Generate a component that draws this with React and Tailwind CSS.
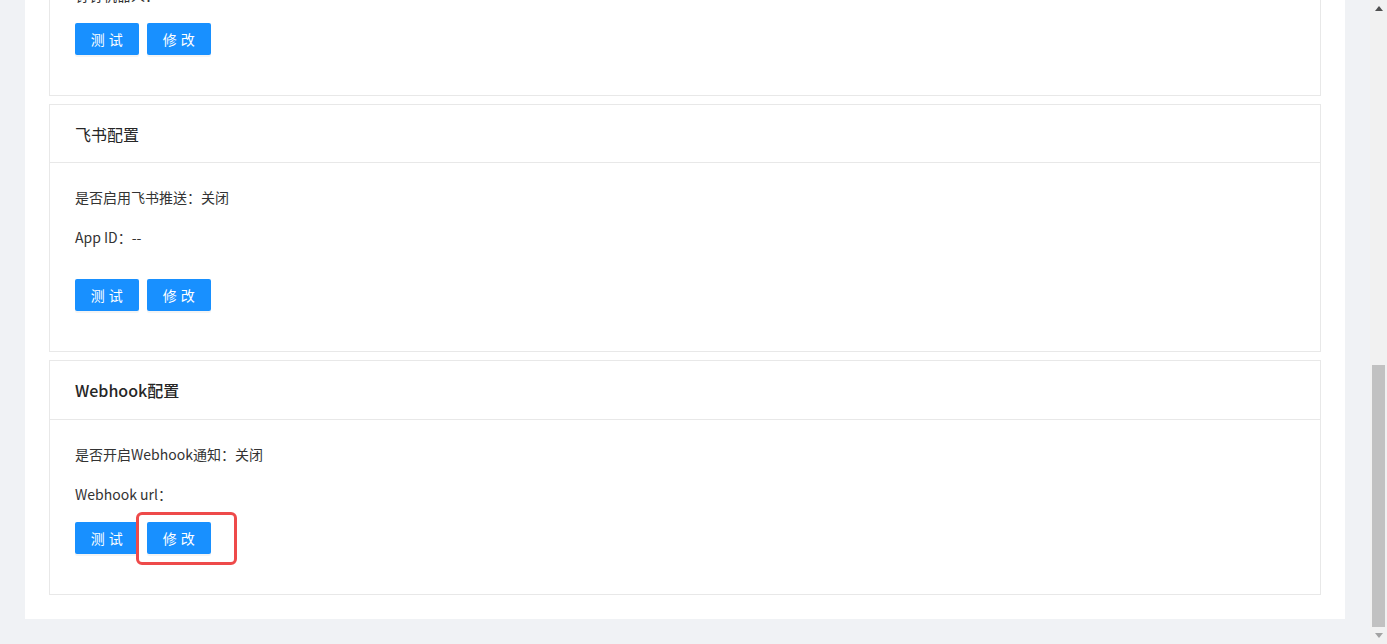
import React from "react";

const font = { fontFamily: '"Noto Sans CJK SC", "Noto Sans", sans-serif' };

function Btn({ children, highlight }) {
  return (
    <div className="relative">
      <button className="w-[64px] h-[32px] rounded-[2px] bg-[#1890ff] text-white text-[14px] leading-[32px] tracking-[0.5px] shadow-[0_2px_0_rgba(0,0,0,0.045)]">
        {children}
      </button>
      {highlight && (
        <div className="absolute left-[-11px] top-[-10px] w-[101px] h-[53px] border-[3px] border-[#ee4a4a] rounded-[6px] pointer-events-none" />
      )}
    </div>
  );
}

function Card({ title, titleClass = "", headH = "h-[58px]", lines, gap = "mt-[18px]", highlight }) {
  return (
    <div className="border border-[#e8e8e8] bg-white">
      <div className={`${headH} border-b border-[#e8e8e8] px-[25px] flex items-center text-[16px] text-[#262626] ${titleClass}`}>
        {title}
      </div>
      <div className="px-[25px] pt-[24px] pb-[40px] text-[14px] text-[#333]">
        <div className="flex flex-col gap-[20px]">
          {lines.map((l, i) => (
            <div key={i} className="h-[20px] leading-[20px]">{l}</div>
          ))}
        </div>
        <div className={`${gap} flex gap-[8px]`}>
          <Btn>测 试</Btn>
          <Btn highlight={highlight}>修 改</Btn>
        </div>
      </div>
    </div>
  );
}

export default function App() {
  return (
    <div style={font} className="flex w-[1387px] h-[644px] overflow-hidden bg-[#f0f2f5]">
      <div className="flex-1 h-[644px] overflow-hidden flex flex-col justify-end pb-[25px] px-[25px]">
        <div className="bg-white p-[24px] flex flex-col gap-[8px] shrink-0">
          <Card
            title="钉钉配置"
            lines={["是否启用钉钉推送：关闭", "钉钉机器人：--"]}
          />
          <Card
            title="飞书配置"
            lines={["是否启用飞书推送：关闭", "App ID：--"]}
            gap="mt-[32px]"
          />
          <Card
            title="Webhook配置"
            titleClass="font-medium"
            headH="h-[59px]"
            lines={["是否开启Webhook通知：关闭", "Webhook url："]}
            highlight
          />
        </div>
      </div>
      <div className="w-[17px] h-[644px] bg-[#f1f1f1] flex flex-col items-center shrink-0">
        <div className="h-[17px] w-full flex items-center justify-center">
          <svg width="8" height="5" viewBox="0 0 8 5"><path d="M0 5 L4 0 L8 5 Z" fill="#505050" /></svg>
        </div>
        <div className="flex-1 w-full flex flex-col justify-end px-[2px]">
          <div className="h-[262px] w-full bg-[#c1c1c1]" />
        </div>
        <div className="h-[17px] w-full flex items-center justify-center">
          <svg width="8" height="5" viewBox="0 0 8 5"><path d="M0 0 L8 0 L4 5 Z" fill="#a3a3a3" /></svg>
        </div>
      </div>
    </div>
  );
}
